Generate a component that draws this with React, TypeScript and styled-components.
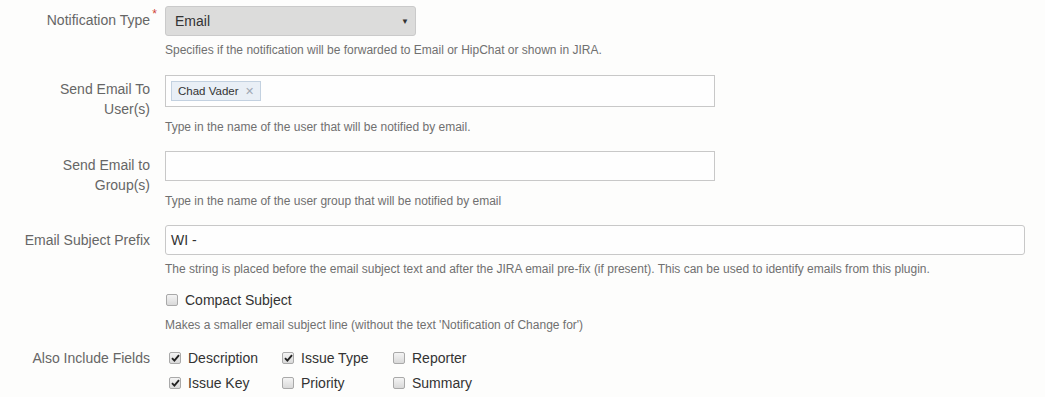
import React from 'react';
import styled, { createGlobalStyle } from 'styled-components';

const GlobalStyle = createGlobalStyle`
  html, body {
    margin: 0;
    padding: 0;
    background: #fdfdfc;
    font-family: "Liberation Sans", Arial, sans-serif;
  }
`;

const Form = styled.div`
  display: flex;
  flex-direction: column;
  padding-top: 6px;
`;

const FieldGroup = styled.div<{ top?: number }>`
  display: grid;
  grid-template-columns: 150px 1fr;
  column-gap: 15px;
  margin-top: ${p => p.top ?? 0}px;
`;

const Label = styled.div<{ pad?: number }>`
  position: relative;
  text-align: right;
  font-size: 14px;
  line-height: 20px;
  color: #666;
  padding-top: ${p => p.pad ?? 5}px;
`;

const Required = styled.span`
  position: absolute;
  right: -7px;
  top: 2px;
  color: #d04437;
  font-size: 12px;
  line-height: 12px;
`;

const FieldCol = styled.div`
  display: flex;
  flex-direction: column;
  align-items: flex-start;
`;

const Select = styled.div`
  box-sizing: border-box;
  width: 251px;
  height: 30px;
  background: #dcdcdb;
  border: 1px solid #cacaca;
  border-radius: 3px;
  display: flex;
  align-items: center;
  justify-content: space-between;
  padding: 0 6px 0 9px;
  font-size: 14px;
  color: #333;
`;

const Caret = styled.span`
  font-size: 8px;
  color: #333;
`;

const Input = styled.div<{ w: number; h: number; round?: boolean }>`
  box-sizing: border-box;
  width: ${p => p.w}px;
  height: ${p => p.h}px;
  background: #fefefe;
  border: 1px solid #c8c8c8;
  border-radius: ${p => (p.round ? 3 : 0)}px;
  display: flex;
  align-items: center;
  padding: 0 5px;
  font-size: 14px;
  color: #333;
`;

const Tag = styled.span`
  box-sizing: border-box;
  height: 20px;
  display: inline-flex;
  align-items: center;
  gap: 6px;
  padding: 0 6px 0 6px;
  background: #e9eff6;
  border: 1px solid #c3d1e0;
  font-size: 11.5px;
  color: #333;
`;

const TagClose = styled.span`
  color: #a0a8b4;
  font-size: 11px;
`;

const Help = styled.div<{ gap: number }>`
  margin-top: ${p => p.gap}px;
  font-size: 12px;
  line-height: 16px;
  color: #707070;
  white-space: nowrap;
`;

const CheckRow = styled.label<{ indent?: number }>`
  display: flex;
  align-items: center;
  height: 20px;
  padding-left: ${p => p.indent ?? 0}px;
  font-size: 14px;
  color: #333;
  white-space: nowrap;
`;

const Box = styled.span`
  box-sizing: border-box;
  width: 12px;
  height: 12px;
  margin-right: 7px;
  border: 1px solid #a9a9a9;
  border-radius: 2px;
  background: linear-gradient(#f4f4f4, #d9d9d9);
  display: inline-flex;
  align-items: center;
  justify-content: center;
`;

const FieldsGrid = styled.div`
  display: grid;
  grid-template-columns: 113px 111px auto;
  row-gap: 5px;
`;

const Checkbox: React.FC<{ checked?: boolean }> = ({ checked }) => (
  <Box>
    {checked && (
      <svg width="9" height="8" viewBox="0 0 9 8">
        <path d="M1 4.2 L3.4 6.6 L8 1.2" fill="none" stroke="#222" strokeWidth="1.9" />
      </svg>
    )}
  </Box>
);

const fields = [
  { name: 'Description', checked: true },
  { name: 'Issue Type', checked: true },
  { name: 'Reporter', checked: false },
  { name: 'Issue Key', checked: true },
  { name: 'Priority', checked: false },
  { name: 'Summary', checked: false },
];

export default function App() {
  return (
    <>
      <GlobalStyle />
      <Form>
        <FieldGroup>
          <Label pad={4}>
            Notification Type<Required>*</Required>
          </Label>
          <FieldCol>
            <Select>
              Email
              <Caret>▼</Caret>
            </Select>
            <Help gap={6}>
              Specifies if the notification will be forwarded to Email or HipChat or shown in JIRA.
            </Help>
          </FieldCol>
        </FieldGroup>

        <FieldGroup top={17}>
          <Label pad={4}>
            Send Email To
            <br />
            User(s)
          </Label>
          <FieldCol>
            <Input w={550} h={32}>
              <Tag>
                Chad Vader <TagClose>✕</TagClose>
              </Tag>
            </Input>
            <Help gap={12}>Type in the name of the user that will be notified by email.</Help>
          </FieldCol>
        </FieldGroup>

        <FieldGroup top={16}>
          <Label pad={4}>
            Send Email to
            <br />
            Group(s)
          </Label>
          <FieldCol>
            <Input w={550} h={30} />
            <Help gap={12}>Type in the name of the user group that will be notified by email</Help>
          </FieldCol>
        </FieldGroup>

        <FieldGroup top={16}>
          <Label pad={5}>Email Subject Prefix</Label>
          <FieldCol>
            <Input w={860} h={30} round>
              WI -
            </Input>
            <Help gap={6}>
              The string is placed before the email subject text and after the JIRA email pre-fix (if present). This
              can be used to identify emails from this plugin.
            </Help>
          </FieldCol>
        </FieldGroup>

        <FieldGroup top={13}>
          <Label />
          <FieldCol>
            <CheckRow indent={1}>
              <Checkbox />
              Compact Subject
            </CheckRow>
            <Help gap={7}>Makes a smaller email subject line (without the text 'Notification of Change for')</Help>
          </FieldCol>
        </FieldGroup>

        <FieldGroup top={15}>
          <Label pad={0}>Also Include Fields</Label>
          <FieldsGrid>
            {fields.map(f => (
              <CheckRow key={f.name} indent={4}>
                <Checkbox checked={f.checked} />
                {f.name}
              </CheckRow>
            ))}
          </FieldsGrid>
        </FieldGroup>
      </Form>
    </>
  );
}
